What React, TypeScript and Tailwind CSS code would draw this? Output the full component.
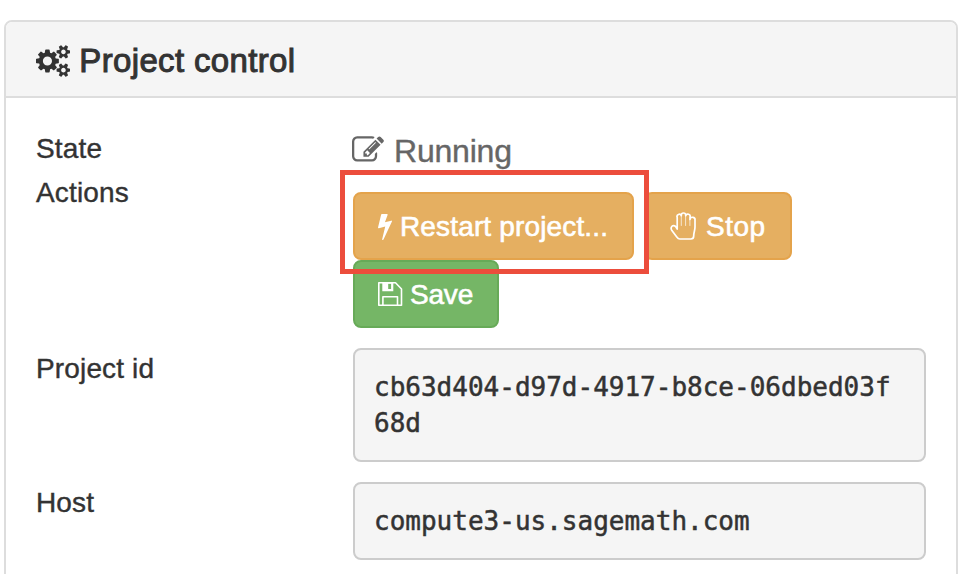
import type { ReactNode } from "react";

const icons = {
  cogs: "M896 896q0-106-75-181t-181-75-181 75-75 181 75 181 181 75 181-75 75-181zm768 512q0-52-38-90t-90-38-90 38-38 90q0 53 37.500 90.500t90.500 37.500 90.500-37.500 37.500-90.500zm0-1024q0-52-38-90t-90-38-90 38-38 90q0 53 37.500 90.500t90.500 37.500 90.500-37.500 37.500-90.500zm-384 421v185q0 10-7 19.500t-16 10.500l-155 24q-11 35-32 76 34 48 90 115 7 11 7 20 0 12-7 19-23 30-82.500 89.500t-78.500 59.500q-11 0-21-7l-115-90q-37 19-77 31-11 108-23 155-7 24-30 24h-186q-11 0-20-7.500t-10-17.500l-23-153q-34-10-75-31l-118 89q-7 7-20 7-11 0-21-8-144-133-144-160 0-9 7-19 10-14 41-53t47-61q-23-44-35-82l-152-24q-10-1-17-9.500t-7-19.500v-185q0-10 7-19.500t16-10.500l155-24q11-35 32-76-34-48-90-115-7-11-7-20 0-12 7-20 22-30 82-89t79-59q11 0 21 7l115 90q34-18 77-32 11-108 23-154 7-24 30-24h186q11 0 20 7.500t10 17.500l23 153q34 10 75 31l118-89q8-7 20-7 11 0 21 8 144 133 144 160 0 8-7 19-12 16-42 54t-45 60q23 48 34 82l152 23q10 2 17 10.500t7 19.500zm640 533v140q0 16-149 31-12 27-30 52 51 113 51 138 0 4-4 7-122 71-124 71-8 0-46-47t-52-68q-20 2-30 2t-30-2q-14 21-52 68t-46 47q-2 0-124-71-4-3-4-7 0-25 51-138-18-25-30-52-149-15-149-31v-140q0-16 149-31 13-29 30-52-51-113-51-138 0-4 4-7 4-2 35-20t59-34 30-16q8 0 46 46.500t52 67.500q20-2 30-2t30 2q51-71 92-112l6-2q4 0 124 70 4 3 4 7 0 25-51 138 17 23 30 52 149 15 149 31zm0-1024v140q0 16-149 31-12 27-30 52 51 113 51 138 0 4-4 7-122 71-124 71-8 0-46-47t-52-68q-20 2-30 2t-30-2q-14 21-52 68t-46 47q-2 0-124-71-4-3-4-7 0-25 51-138-18-25-30-52-149-15-149-31v-140q0-16 149-31 13-29 30-52-51-113-51-138 0-4 4-7 4-2 35-20t59-34 30-16q8 0 46 46.500t52 67.500q20-2 30-2t30 2q51-71 92-112l6-2q4 0 124 70 4 3 4 7 0 25-51 138 17 23 30 52 149 15 149 31z",
  edit: "M888 1184l116-116-152-152-116 116v56h96v96h56zm440-720q-16-16-33 1l-350 350q-17 17-1 33t33-1l350-350q17-17 1-33zm80 594v190q0 119-84.500 203.500t-203.500 84.500h-832q-119 0-203.500-84.500t-84.500-203.500v-832q0-119 84.500-203.500t203.500-84.500h832q63 0 117 25 15 7 18 23 3 17-9 29l-49 49q-14 14-32 8-23-6-45-6h-832q-66 0-113 47t-47 113v832q0 66 47 113t113 47h832q66 0 113-47t47-113v-126q0-13 9-22l64-64q15-15 35-7t20 29zm-96-738l288 288-672 672h-288v-288zm444 132l-92 92-288-288 92-92q28-28 68-28t68 28l152 152q28 28 28 68t-28 68z",
  bolt: "M1333 566q18 20 7 44l-540 1157q-13 25-42 25-4 0-14-2-17-5-25.500-19t-4.500-30l197-808-406 101q-4 1-12 1-18 0-31-11-18-16-13-39l201-825q4-14 16-23t28-9h328q19 0 32 12.500t13 29.500q0 8-5 18l-171 463 396-98q8-2 12-2 19 0 34 15z",
};

function Icon({ name, box, className }: { name: keyof typeof icons; box: string; className: string }) {
  return (
    <svg viewBox={box} className={`shrink-0 ${className}`} fill="currentColor" aria-hidden="true">
      <path d={icons[name]} />
    </svg>
  );
}

function Hand() {
  return (
    <svg viewBox="0 0 26 28" className="ml-px h-7 w-[26px] shrink-0" fill="none" stroke="currentColor" strokeLinejoin="round" strokeLinecap="round" aria-hidden="true">
      <path strokeWidth="1.700" d="M7.200 17V5.300a2.200 2.200 0 0 1 4.100-1.600V3.200a2.200 2.200 0 0 1 4.400 0v.5a2.200 2.200 0 0 1 4.300 1.500v2.200a2.500 2.500 0 0 1 5 .800V15c0 3.500-1.300 5-1.300 9 0 2-1.200 3-2.900 3H9.800c-1.300 0-2-.500-3-1.900L1.900 18.600c-2.200-3.600 1.200-6.600 3.600-4.200z" />
      <path strokeWidth="0.700" d="M11.300 4v9.500M15.600 4v9.500M19.900 7v6.500" />
    </svg>
  );
}

function Floppy() {
  return (
    <svg viewBox="0 0 25 24" className="h-6 w-[25px] shrink-0" fill="none" stroke="currentColor" strokeWidth="1.600" strokeLinejoin="round" aria-hidden="true">
      <path d="M.8.8h16.700l6 6.200v16.200H.8zM4.900 23v-8.200h14.600V23" />
      <path d="M4.300 0h11v9.300h-11zM10.200 1.700V7h2.900V1.700z" fill="currentColor" fillRule="evenodd" stroke="none" />
    </svg>
  );
}

function Row({ label, className, children }: { label: string; className: string; children: ReactNode }) {
  return (
    <div className={`flex items-start ${className}`}>
      <div className="w-[317px] shrink-0 pt-px tracking-[0.150px] [-webkit-text-stroke:0.4px]">{label}</div>
      <div className="w-[573px] shrink-0">{children}</div>
    </div>
  );
}

const button = "flex h-[68px] items-center rounded-lg border-2 pl-[23px] text-white [-webkit-text-stroke:0.6px] ";
const code = "rounded-lg border-2 border-[#ccc] bg-[#f5f5f5] px-[19px] py-[19px] font-['DejaVu_Sans_Mono',monospace] text-[26px] leading-9 break-all [-webkit-text-stroke:0.5px]";

export default function App() {
  return (
    <main className="h-[574px] w-[968px] overflow-hidden bg-white pt-5 pl-1 font-['Liberation_Sans',Arial,sans-serif] text-[28px] leading-10 text-[#333]">
      <section className="h-[600px] w-[954px] rounded-lg border-2 border-[#ddd]">
        <header className="flex h-[76px] items-center rounded-t-md border-b-2 border-[#ddd] bg-[#f5f5f5] pt-1 pl-[30px]">
          <Icon name="cogs" box="0 0 1920 1792" className="h-8 w-[34.300px]" />
          <h1 className="ml-[9px] text-[33px] tracking-[0.350px] [-webkit-text-stroke:1px]">Project control</h1>
        </header>
        <div className="pt-[30px] pl-[30px]">
          <Row label="State" className="h-11">
            <div className="mt-[3px] flex items-center text-[32px] text-[#666]">
              <Icon name="edit" box="0 0 1792 1792" className="-ml-px mb-0.5 h-8 w-8" />
              <span className="ml-[10px] tracking-[-0.200px] [-webkit-text-stroke:0.4px]">Running</span>
            </div>
          </Row>
          <Row label="Actions" className="h-44">
            <div className="pt-5">
              <div className="flex gap-[10px]">
                <div className="relative">
                  <button className={button + "w-[281px] border-[#e4a34b] bg-[#e5af61]"}>
                    <Icon name="bolt" box="448 0 896 1792" className="h-7 w-[14px]" />
                    <span className="ml-[8px] pt-px tracking-[0.150px]">Restart project...</span>
                  </button>
                  <div className="absolute -top-[22px] -left-[13px] z-10 h-[104px] w-[309px] border-[5px] border-[#ec4d3c]" />
                </div>
                <button className={button + "w-[148px] border-[#e4a34b] bg-[#e5af61]"}>
                  <Hand />
                  <span className="ml-[10px] pt-px tracking-[0.500px]">Stop</span>
                </button>
              </div>
              <button className={button + "w-[146px] border-[#67aa58] bg-[#75b666]"}>
                <Floppy />
                <span className="ml-[7px] pt-px tracking-[-0.200px]">Save</span>
              </button>
            </div>
          </Row>
          <Row label="Project id" className="h-[134px]">
            <div className={code}>cb63d404-d97d-4917-b8ce-06dbed03f68d</div>
          </Row>
          <Row label="Host" className="h-[134px]">
            <div className={code}>compute3-us.sagemath.com</div>
          </Row>
        </div>
      </section>
    </main>
  );
}
